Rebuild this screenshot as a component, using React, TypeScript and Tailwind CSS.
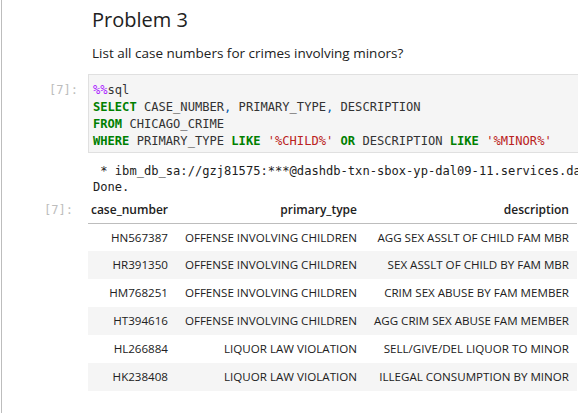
import React from "react";

const mono = { fontFamily: '"DejaVu Sans Mono", monospace' } as const;
const sans = { fontFamily: '"Open Sans", "Noto Sans", sans-serif' } as const;

const rows = [
  ["HN567387", "OFFENSE INVOLVING CHILDREN", "AGG SEX ASSLT OF CHILD FAM MBR"],
  ["HR391350", "OFFENSE INVOLVING CHILDREN", "SEX ASSLT OF CHILD BY FAM MBR"],
  ["HM768251", "OFFENSE INVOLVING CHILDREN", "CRIM SEX ABUSE BY FAM MEMBER"],
  ["HT394616", "OFFENSE INVOLVING CHILDREN", "AGG CRIM SEX ABUSE FAM MEMBER"],
  ["HL266884", "LIQUOR LAW VIOLATION", "SELL/GIVE/DEL LIQUOR TO MINOR"],
  ["HK238408", "LIQUOR LAW VIOLATION", "ILLEGAL CONSUMPTION BY MINOR"],
];

const K = ({ children }: { children: React.ReactNode }) => (
  <span className="font-bold text-[#008000]">{children}</span>
);
const S = ({ children }: { children: React.ReactNode }) => (
  <span className="text-[#ba2121]">{children}</span>
);

export default function App() {
  return (
    <div className="w-[578px] h-[413px] overflow-hidden bg-white pl-px">
      <div className="h-full border-l border-[#bdbdbd] text-[#212121]">
        {/* markdown cell */}
        <div className="pl-[90px] pt-[6px]" style={sans}>
          <h2 className="text-[20px] leading-[28px] text-[#212121]">Problem 3</h2>
          <p className="mt-[10px] text-[13.5px] leading-[18px] text-[#212121]">
            List all case numbers for crimes involving minors?
          </p>
        </div>

        {/* code cell */}
        <div className="mt-[12px] flex">
          <div
            className="w-[86px] shrink-0 pr-[10px] pt-[8px] text-right text-[12.1px] leading-[17px] text-[#bdbdbd]"
            style={mono}
          >
            [7]:
          </div>
          <div className="w-[500px] shrink-0 border border-[#e0e0e0] bg-[#f5f5f5]">
            <pre
              className="pl-[4px] pt-[7px] pb-[2px] text-[12.1px] leading-[17px] text-[#333333]"
              style={mono}
            >
              <span className="text-[#aa22ff]">%%</span>sql{"\n"}
              <K>SELECT</K> CASE_NUMBER<span className="text-[#0055aa]">,</span> PRIMARY_TYPE
              <span className="text-[#0055aa]">,</span> DESCRIPTION{"\n"}
              <K>FROM</K> CHICAGO_CRIME{"\n"}
              <K>WHERE</K> PRIMARY_TYPE <K>LIKE</K> <S>'%CHILD%'</S> <K>OR</K> DESCRIPTION{" "}
              <K>LIKE</K> <S>'%MINOR%'</S>
            </pre>
          </div>
        </div>

        {/* stdout */}
        <div className="mt-[10px] flex">
          <div className="w-[86px] shrink-0" />
          <pre
            className="pl-[5px] text-[12.1px] leading-[16px] text-[#212121] whitespace-pre"
            style={mono}
          >
            {" * ibm_db_sa://gzj81575:***@dashdb-txn-sbox-yp-dal09-11.services.dal.bluemix.net:50000/BLUDB\nDone."}
          </pre>
        </div>

        {/* table output */}
        <div className="mt-[2px] flex">
          <div
            className="w-[86px] shrink-0 pr-[15px] pt-[5px] text-right text-[12.1px] leading-[17px] text-[#bdbdbd]"
            style={mono}
          >
            [7]:
          </div>
          <table className="table-fixed border-collapse text-[11.6px] text-[#212121]" style={sans}>
            <colgroup>
              <col className="w-[88px]" />
              <col className="w-[189px]" />
              <col className="w-[212px]" />
            </colgroup>
            <thead>
              <tr className="h-[26px] border-b border-[#bdbdbd]">
                <th className="pr-[8px] text-right text-[12px] font-semibold whitespace-nowrap">case_number</th>
                <th className="pr-[8px] text-right text-[12px] font-semibold whitespace-nowrap">primary_type</th>
                <th className="pr-[8px] text-right text-[12px] font-semibold whitespace-nowrap">description</th>
              </tr>
            </thead>
            <tbody>
              {rows.map((r, i) => (
                <tr key={r[0]} className={i % 2 === 1 ? "h-[28px] bg-[#f5f5f5]" : "h-[28px]"}>
                  {r.map((c) => (
                    <td key={c} className="pr-[8px] text-right whitespace-nowrap">
                      {c}
                    </td>
                  ))}
                </tr>
              ))}
            </tbody>
          </table>
        </div>
      </div>
    </div>
  );
}
